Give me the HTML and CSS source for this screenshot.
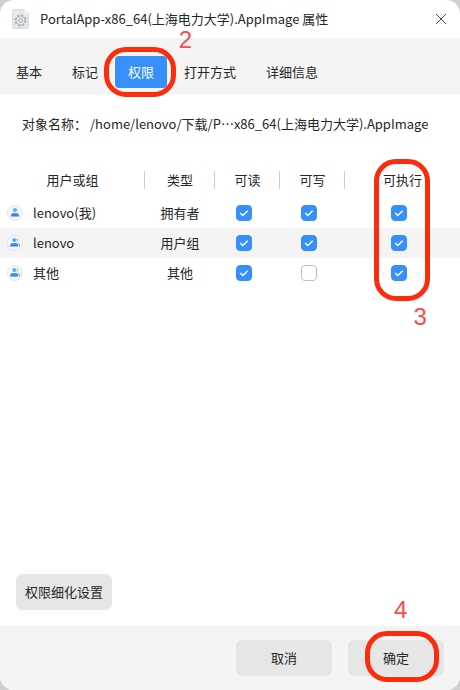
FILE: index.html
```html
<!DOCTYPE html>
<html lang="zh-CN">
<head>
<meta charset="utf-8">
<meta name="viewport" content="width=device-width, initial-scale=1">
<title>PortalApp-x86_64(上海电力大学).AppImage 属性</title>
<link rel="stylesheet" href="styles.css">
</head>
<body>
<svg class="defs" aria-hidden="true">
  <defs>
    <linearGradient id="blue" x1="0" y1="0" x2="0" y2="1">
      <stop offset="0" stop-color="#4a9df5"/>
      <stop offset="1" stop-color="#3a6fe6"/>
    </linearGradient>
    <symbol id="user" viewBox="0 0 16 16">
      <circle cx="8" cy="8" r="7.5" fill="#f5f8fb" stroke="#e1e5ea"/>
      <circle cx="8" cy="5" r="2.1" fill="#55b2f8"/>
      <path d="M4 11.600v-1c0-1.600 1-2.600 2.400-2.600h3.200c1.400 0 2.400 1 2.400 2.600v1z" fill="url(#blue)"/>
    </symbol>
    <symbol id="group" viewBox="0 0 16 16">
      <circle cx="8" cy="8" r="7.500" fill="#f5f8fb" stroke="#e1e5ea"/>
      <circle cx="7.200" cy="5" r="2.100" fill="#55b2f8"/>
      <path d="M9.700 3.300a2 2 0 0 1 0 3.500" fill="none" stroke="#6cb9f7"/>
      <path d="M3.200 11.600v-1c0-1.600 1-2.600 2.400-2.600h3.200c1.400 0 2.400 1 2.400 2.600v1z" fill="url(#blue)"/>
      <path d="M11.300 8.300c.8.400 1.200 1.100 1.200 2.100v1.200" fill="none" stroke="#4c86ec"/>
    </symbol>
  </defs>
</svg>

<div class="window">
  <header class="titlebar">
    <svg class="file-icon" viewBox="0 0 18 22" aria-hidden="true">
      <path d="M2 1.500h10.500l4 4V19a1.500 1.500 0 0 1-1.500 1.500H2A1.500 1.500 0 0 1 .5 19V3A1.500 1.500 0 0 1 2 1.500z" fill="#e6e8ec" stroke="#d8dbe0"/>
      <path d="M12.500 1.500v4h4z" fill="#f7f8f9"/>
      <circle cx="8.500" cy="12.500" r="5.500" fill="none" stroke="#a9b1bd" stroke-width="1.400" stroke-dasharray="2.160 2.160"/>
      <circle cx="8.500" cy="12.500" r="4.500" fill="none" stroke="#a9b1bd"/>
      <circle cx="8.500" cy="12.500" r="2" fill="none" stroke="#a9b1bd"/>
    </svg>
    <h1 class="title">PortalApp-x86_64(上海电力大学).AppImage 属性</h1>
    <button class="close" type="button" aria-label="关闭">
      <svg viewBox="0 0 12 12" aria-hidden="true"><path d="M1 1l10 10M11 1L1 11" stroke="#444" fill="none"/></svg>
    </button>
  </header>

  <nav class="tabs">
    <button class="tab" type="button">基本</button>
    <button class="tab" type="button">标记</button>
    <div class="marked">
      <button class="tab active" type="button">权限</button>
      <span class="ring ring-tab"></span>
      <span class="step step-tab">2</span>
    </div>
    <button class="tab" type="button">打开方式</button>
    <button class="tab" type="button">详细信息</button>
  </nav>

  <main class="content">
    <p class="object"><span>对象名称：</span><span>/home/lenovo/下载/P⋯x86_64(上海电力大学).AppImage</span></p>

    <table class="permissions">
      <thead>
        <tr>
          <th class="col-user">用户或组</th>
          <th class="col-type">类型</th>
          <th class="col-flag">可读</th>
          <th class="col-flag">可写</th>
          <th class="col-exec">可执行<span class="ring ring-exec"></span><span class="step step-exec">3</span></th>
        </tr>
      </thead>
      <tbody>
        <tr>
          <td><div class="user"><svg class="avatar" aria-hidden="true"><use href="#user"/></svg>lenovo(我)</div></td>
          <td>拥有者</td>
          <td class="flag"><input type="checkbox" aria-label="拥有者 可读" checked></td>
          <td class="flag"><input type="checkbox" aria-label="拥有者 可写" checked></td>
          <td class="flag"><input type="checkbox" aria-label="拥有者 可执行" checked></td>
        </tr>
        <tr>
          <td><div class="user"><svg class="avatar" aria-hidden="true"><use href="#group"/></svg>lenovo</div></td>
          <td>用户组</td>
          <td class="flag"><input type="checkbox" aria-label="用户组 可读" checked></td>
          <td class="flag"><input type="checkbox" aria-label="用户组 可写" checked></td>
          <td class="flag"><input type="checkbox" aria-label="用户组 可执行" checked></td>
        </tr>
        <tr>
          <td><div class="user"><svg class="avatar" aria-hidden="true"><use href="#group"/></svg>其他</div></td>
          <td>其他</td>
          <td class="flag"><input type="checkbox" aria-label="其他 可读" checked></td>
          <td class="flag"><input type="checkbox" aria-label="其他 可写"></td>
          <td class="flag"><input type="checkbox" aria-label="其他 可执行" checked></td>
        </tr>
      </tbody>
    </table>

    <button class="btn advanced" type="button">权限细化设置</button>
  </main>

  <footer class="actions">
    <button class="btn" type="button">取消</button>
    <div class="marked">
      <button class="btn" type="button">确定</button>
      <span class="ring ring-ok"></span>
      <span class="step step-ok">4</span>
    </div>
  </footer>
</div>
</body>
</html>
```

FILE: styles.css
```css
* {
    box-sizing: border-box;
}
body {
    margin: 0;
    background: #cfcfcf;
    color: #262626;
    font: 13px/20px "Noto Sans CJK SC", sans-serif;
}
button {
    border: 0;
    padding: 0;
    color: inherit;
    font: inherit;
}
.defs {
    position: absolute;
    width: 0;
    height: 0;
}
.window {
    display: flex;
    flex-direction: column;
    min-height: 100vh;
    background: #fff;
    border-radius: 14px;
    overflow: hidden;
}

/* title bar */
.titlebar {
    display: flex;
    align-items: center;
    height: 38px;
    padding: 0 12px;
}
.file-icon {
    width: 18px;
    height: 22px;
    margin-right: 10px;
}
.title {
    flex: 1;
    margin: 0;
    font-size: 13px;
    font-weight: normal;
}
.close {
    display: flex;
    align-items: center;
    justify-content: center;
    width: 14px;
    height: 20px;
    background: none;
}
.close svg {
    width: 12px;
    height: 12px;
}

/* tabs */
.tabs {
    display: flex;
    align-items: center;
    gap: 4px;
    height: 56px;
    padding: 11px 3px 0;
    background: #f4f4f4;
}
.tab {
    height: 32px;
    padding: 0 13px;
    border-radius: 4px;
    background: none;
}
.tab.active {
    background: #3790fa;
    color: #fff;
}

/* permissions page */
.content {
    flex: 1;
    display: flex;
    flex-direction: column;
    padding: 20px 0 16px;
}
.object {
    display: flex;
    gap: 3px;
    margin: 0 22px;
}
.permissions {
    width: 100%;
    margin-top: 32px;
    border-collapse: collapse;
    table-layout: fixed;
    text-align: center;
}
th {
    height: 32px;
    padding: 0 0 4px;
    font-weight: normal;
    background: linear-gradient(#ccc, #ccc) right 5px / 1px 18px no-repeat;
}
td {
    height: 30px;
    padding: 0;
}
tbody tr:nth-child(even) {
    background: #f4f4f4;
}
.col-user {
    width: 145px;
}
.col-type {
    width: 70px;
}
.col-flag {
    width: 65px;
}
.col-exec {
    position: relative;
    background: none;
}
.user {
    display: flex;
    align-items: center;
    gap: 10px;
    padding-left: 7px;
}
.avatar {
    width: 16px;
    height: 16px;
}
.flag {
    padding-right: 7px;
}
input[type="checkbox"] {
    appearance: none;
    display: block;
    width: 16px;
    height: 16px;
    margin: 0 auto;
    border: 1px solid #bfbfbf;
    border-radius: 4px;
    background: #fff;
}
input[type="checkbox"]:checked {
    border-color: #3790fa;
    background: #3790fa url("data:image/svg+xml,%3Csvg xmlns='http://www.w3.org/2000/svg' viewBox='0 0 14 14'%3E%3Cpath d='M3.200 7l2.600 2.500 4.900-4.700' fill='none' stroke='white' stroke-width='1.500'/%3E%3C/svg%3E") center / 14px no-repeat;
}

.btn {
    width: 96px;
    height: 36px;
    border-radius: 6px;
    background: #e6e6e6;
}
.advanced {
    margin: auto 16px 0;
}
.actions {
    display: flex;
    justify-content: flex-end;
    gap: 16px;
    padding: 14px 16px;
    background: #f4f4f4;
}

/* step marks */
.marked {
    position: relative;
}
.ring {
    position: absolute;
    border: 5px solid #fb2c0b;
    border-radius: 22px;
    pointer-events: none;
}
.ring-tab {
    inset: -9px -9px -9px -11px;
}
.ring-exec {
    top: -7px;
    left: 50%;
    width: 56px;
    height: 142px;
    margin-left: -29px;
}
.ring-ok {
    inset: -9px 5px -6px 17px;
}
.step {
    position: absolute;
    color: #fb4b47;
    font: 24px/24px "Liberation Sans", sans-serif;
}
.step-tab {
    top: -28px;
    right: -25px;
}
.step-exec {
    top: 139px;
    left: 50%;
    margin-left: 11px;
}
.step-ok {
    top: -42px;
    left: 46px;
}
```
